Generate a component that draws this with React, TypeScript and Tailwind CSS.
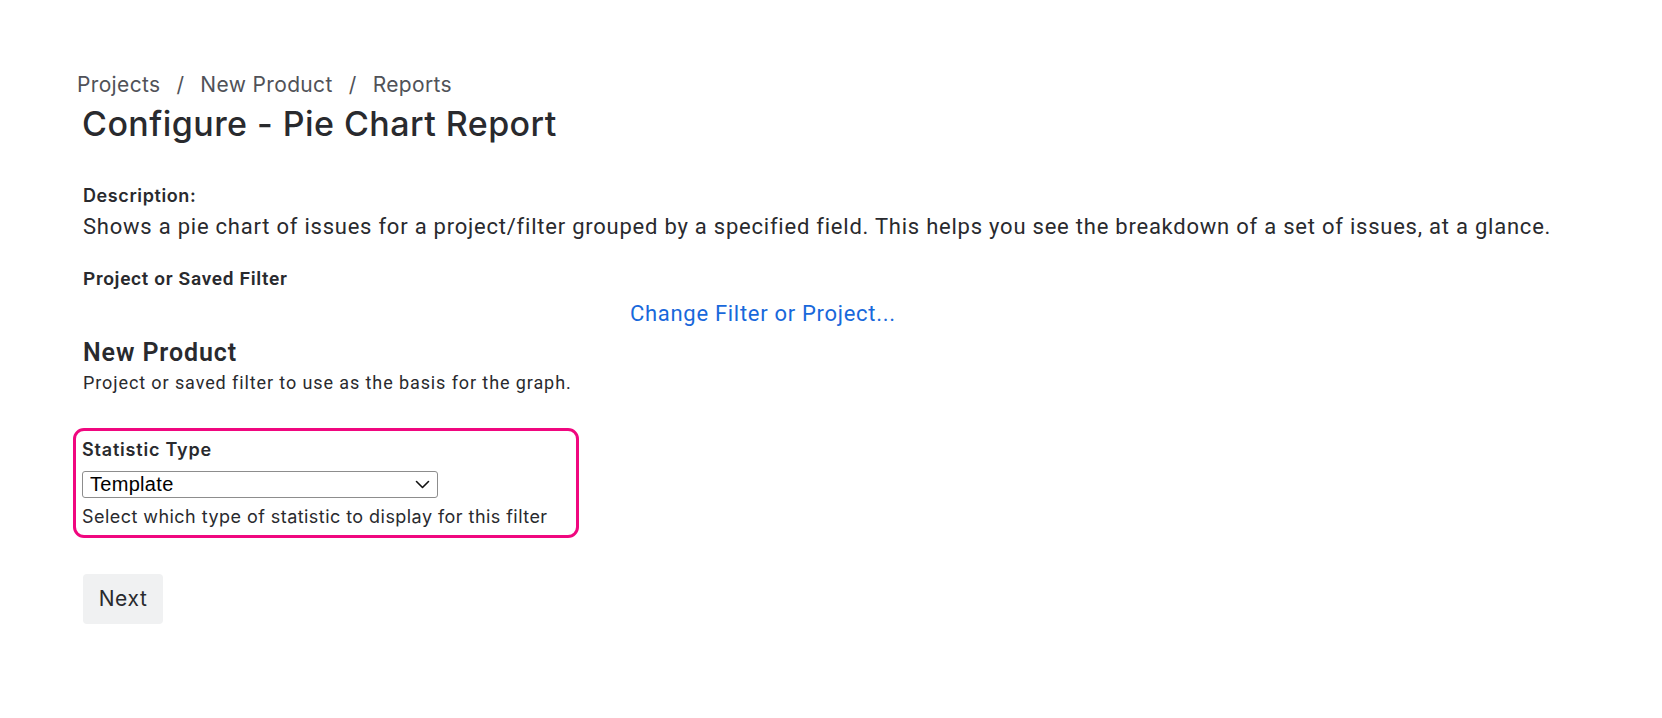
import { useState } from "react";

const sans = "font-['Inter','Liberation_Sans',sans-serif]";
const alt = "font-['Roboto','Liberation_Sans',sans-serif]";

export default function App() {
  const [stat, setStat] = useState("template");

  return (
    <div className={`min-h-screen bg-white text-[#292a2e] ${sans}`}>
      <div className="pl-[83px] pt-[73px]">
        {/* Breadcrumbs */}
        <nav className="-ml-[6px] flex items-center gap-[16px] text-[21px] leading-6 tracking-[0.35px] text-[#505258]">
          <a href="#">Projects</a>
          <span>/</span>
          <a href="#">New Product</a>
          <span>/</span>
          <a href="#">Reports</a>
        </nav>
        <h1 className="-ml-[1px] mt-[7px] text-[34px] font-medium leading-10 tracking-[0.45px]">
          Configure - Pie Chart Report
        </h1>

        {/* Description */}
        <div className="mt-[42px] text-[18px] font-semibold leading-5 tracking-[0.6px]">
          Description:
        </div>
        <p className={`mt-[7px] text-[22px] leading-7 tracking-[0.77px] ${alt}`}>
          Shows a pie chart of issues for a project/filter grouped by a specified field. This helps you see the breakdown of a set of issues, at a glance.
        </p>

        {/* Project / filter */}
        <div className={`mt-[28px] text-[19px] font-semibold leading-5 tracking-[0.7px] ${alt}`}>
          Project or Saved Filter
        </div>
        <div className={`mt-[11px] pl-[547px] text-[22px] leading-7 tracking-[0.7px] ${alt}`}>
          <a href="#" className="text-[#1868db]">
            Change Filter or Project...
          </a>
        </div>
        <h2 className={`mt-[11px] text-[25px] font-semibold leading-7 tracking-[0.9px] ${alt}`}>
          New Product
        </h2>
        <p className={`mt-[5px] text-[18px] leading-[22px] tracking-[0.9px] ${alt}`}>
          Project or saved filter to use as the basis for the graph.
        </p>

        {/* Statistic type */}
        <div className="-ml-[10px] mt-[34px] w-[506px] rounded-[11px] border-[3px] border-[#f0077f] pb-[7px] pl-[6px] pt-[8px]">
          <label htmlFor="statType" className="block text-[18px] font-semibold leading-[22px] tracking-[0.8px]">
            Statistic Type
          </label>
          <div className="relative mt-[10px] w-[356px]">
            <select
              id="statType"
              value={stat}
              onChange={(e) => setStat(e.target.value)}
              className="block h-[27px] w-full appearance-none rounded-[3px] border border-[#8d8d8d] bg-white pl-[7px] font-['Liberation_Sans',Arial,sans-serif] text-[20px] leading-[25px] tracking-[0.3px] text-black"
            >
              <option value="template">Template</option>
              <option value="assignee">Assignee</option>
              <option value="priority">Priority</option>
              <option value="status">Status</option>
            </select>
            <svg
              className="pointer-events-none absolute right-[8px] top-[8px] h-[11px] w-[15px]"
              viewBox="0 0 15 11"
              fill="none"
              stroke="#111"
              strokeWidth="1.6"
              strokeLinecap="round"
              strokeLinejoin="round"
            >
              <path d="M1.5 2.5 L7.5 8.5 L13.5 2.5" />
            </svg>
          </div>
          <p className="mt-[8px] text-[18px] leading-[22px] tracking-[0.45px]">
            Select which type of statistic to display for this filter
          </p>
        </div>

        <button
          type="button"
          className="mt-[36px] h-[50px] w-[80px] rounded-[4px] bg-[#f0f1f2] text-[21px] tracking-[0.6px] text-[#292a2e]"
        >
          Next
        </button>
      </div>
    </div>
  );
}
